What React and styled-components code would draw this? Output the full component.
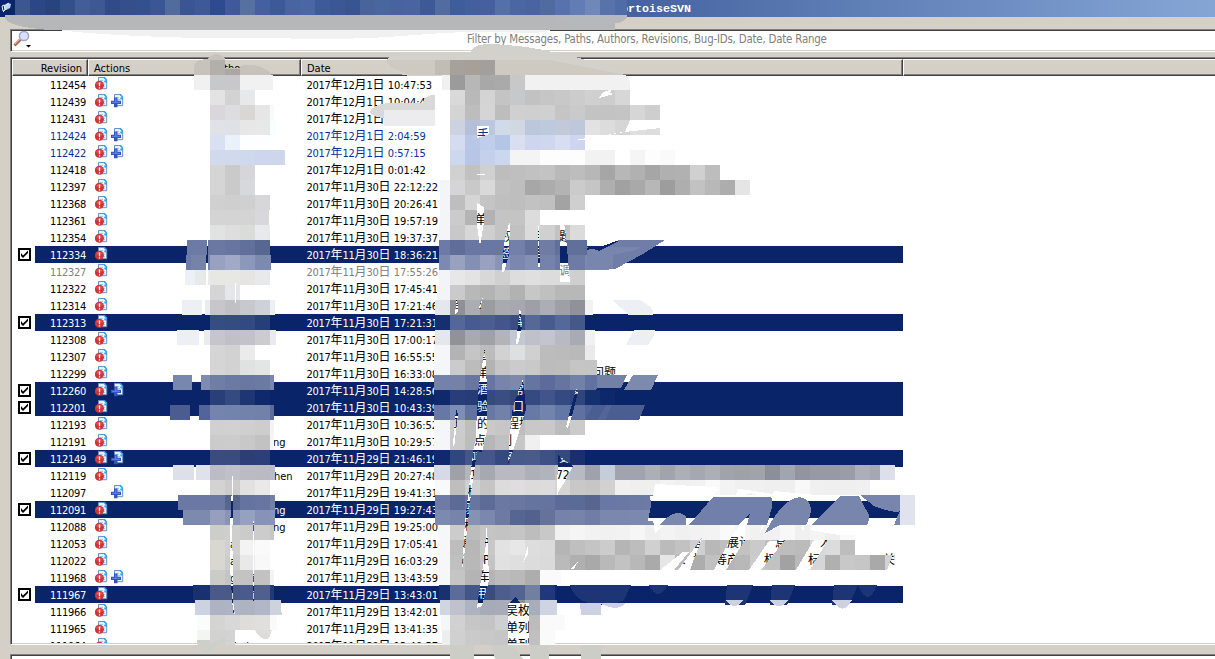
import React from 'react';
import styled, { createGlobalStyle, css } from 'styled-components';

const Global = createGlobalStyle`
  html, body { margin: 0; padding: 0; overflow: hidden; background: #d4d0c8; }
  * { box-sizing: border-box; }
`;

const Window = styled.div`
  position: relative;
  width: 1215px;
  height: 659px;
  overflow: hidden;
  display: flex;
  flex-direction: column;
  background: #d4d0c8;
  font-family: 'DejaVu Sans Condensed', 'DejaVu Sans', 'Noto Sans CJK SC', sans-serif;
  font-size: 11px;
  color: #000;
`;

const TitleBar = styled.div`
  flex: none;
  height: 17px;
  padding: 1px 0 0 614px;
  background: linear-gradient(90deg, #0a246a 0%, #46639f 52%, #5f7fb7 71%, #85a6d5 100%);
  color: #fff;
  font: bold 11.67px/17px 'Liberation Mono', monospace;
`;

const sunken = css`
  border-top: 1px solid #808080;
  border-left: 1px solid #808080;
  box-shadow: inset 1px 1px 0 #404040;
`;

const FilterBox = styled.div`
  ${sunken}
  flex: none;
  display: flex;
  align-items: center;
  height: 23px;
  margin: 12px 0 5px 10px;
  padding: 0 0 2px 2px;
  border-bottom: 1px solid #fff;
  background: linear-gradient(#fff 20px, #d4d0c8 20px);
`;

const SearchButton = styled.svg`
  width: 20px;
  height: 19px;
`;

const Placeholder = styled.span`
  margin-left: 434px;
  color: #808080;
  font-size: 11.4px;
  letter-spacing: -0.2px;
  line-height: 17px;
  white-space: nowrap;
`;

const ListView = styled.div`
  ${sunken}
  flex: none;
  display: flex;
  flex-direction: column;
  height: 588px;
  margin-left: 10px;
  padding: 1px 0 0 1px;
  overflow: hidden;
  background: #fff;
  border-bottom: 1px solid #fff;
`;

const HeaderRow = styled.div`
  flex: none;
  display: flex;
  height: 17px;
  margin-right: -3px;
`;

const HeaderCell = styled.div`
  flex: ${p => (p.$w ? 'none' : '1')};
  width: ${p => (p.$w ? `${p.$w}px` : 'auto')};
  padding: 1px 5px 0;
  text-align: ${p => p.$align || 'left'};
  line-height: 16px;
  background: #d4d0c8;
  border-top: 1px solid #fff;
  border-left: 1px solid #fff;
  border-right: 1px solid #404040;
  border-bottom: 1px solid #404040;
  box-shadow: inset -1px -1px 0 #808080;
`;

const Rows = styled.div`
  flex: none;
  height: 568px;
  overflow: hidden;
  border-bottom: 1px solid #d4d0c8;
`;

const tones = { plain: '#000', blue: '#0a2f9c', gray: '#808080', selected: '#fff' };

const Row = styled.div`
  display: flex;
  height: 17px;
  line-height: 17px;
  white-space: pre;
  color: ${p => tones[p.$tone]};
`;

const CheckCell = styled.div`
  flex: none;
  width: 23px;
  height: 17px;
  padding: 2px 0 0 6px;
  line-height: 0;
`;

const RowBody = styled.div`
  flex: none;
  display: flex;
  width: 868px;
  background: ${p => (p.$selected ? '#0a246a' : 'transparent')};
`;

const Revision = styled.div`
  width: 51px;
  padding-top: 1px;
  text-align: right;
  letter-spacing: -0.3px;
`;

const Actions = styled.div`
  display: flex;
  width: 119px;
  padding-left: 9px;
`;

const ActionSlot = styled.div`
  width: 16px;
  height: 17px;
  line-height: 0;
`;

const Author = styled.div`
  width: 96px;
  padding-top: 1px;
  display: flex;
`;

const DateCell = styled.div`
  flex: none;
  width: 149px;
  padding-left: 5.5px;
  letter-spacing: -0.3px;
  b {
    font: 12px/16px 'Noto Sans CJK SC', sans-serif;
    letter-spacing: 0;
  }
  i { font-style: normal; letter-spacing: 0; }
`;

const Message = styled.div`
  flex: none;
  display: flex;
  width: 453px;
  height: 17px;
  font: 12px/16px 'DejaVu Sans Condensed', 'Noto Sans CJK SC', sans-serif;
`;

const Fragment = styled.span`
  flex: none;
  width: 0;
  margin-left: ${p => p.$gap}px;
`;

const DetailsPane = styled.div`
  ${sunken}
  flex: 1;
  margin: 9px 0 0 10px;
  background: #fff;
`;

const Redaction = styled.svg`
  position: absolute;
  left: 0;
  top: 0;
  pointer-events: none;
`;

const TitleIcon = styled.svg`
  position: absolute;
  left: 0;
  top: 0;
`;

function DocPaper() {
  return (
    <>
      <path d="M4.5 1.5h6.2l2 2.2v9h-8.2z" fill="#e5f3fd" stroke="#6892c9" />
      <path d="M9.500 1h1.300l2 2.500v3H10.500z" fill="#2ba0ee" />
      <path d="M6 4.500h3M6 6.500h4M8 8.500h3M8 10.500h3" stroke="#a9c9e8" />
      <path d="M9.500 2v2.500h2.500z" fill="#fff" />
    </>
  );
}

function ModifiedIcon() {
  return (
    <svg width="16" height="17" viewBox="0 0 16 17">
      <g transform="translate(-1 0)"><DocPaper /></g>
      <circle cx="4.400" cy="9.300" r="4.500" fill="#cf3237" />
      <path d="M1 8.500a3.600 3.600 0 0 1 6.800 0z" fill="#e56a66" opacity=".7" />
      <path d="M4.500 6.500v3.700M4.500 11.200v1.300" stroke="#fff" strokeWidth="1.300" />
    </svg>
  );
}

function AddedIcon() {
  return (
    <svg width="16" height="17" viewBox="0 0 16 17">
      <g transform="translate(-1 0)"><DocPaper /></g>
      <path d="M3 4.500h3.500v3.200h3.500v3.300h-3.500v3.200h-3.500v-3.200h-3.200v-3.300h3.200z" fill="#3155bd" />
      <path d="M4 5.500h1.500v3.200h3.500v1.300h-8v-1.300h3z" fill="#5a7ee2" />
    </svg>
  );
}

function Checked() {
  return (
    <svg width="13" height="13">
      <rect x="1" y="1" width="11" height="11" fill="#fff" stroke="#000" strokeWidth="2" />
      <path d="M3 5v3l2 2 5-5V2.500l-5 5z" fill="#000" />
    </svg>
  );
}

const D1 = '12/1', D30 = '11/30', D29 = '11/29';

// revision, action flags, day, time, tone, message fragments, author fragments
const log = [
  ['112454', 'm', D1, '10:47:53'],
  ['112439', 'ma', D1, '10:04:44'],
  ['112431', 'm', D1, '10:02:12'],
  ['112424', 'ma', D1, '2:04:59', 'blue', [[477, '手']]],
  ['112422', 'ma', D1, '0:57:15', 'blue'],
  ['112418', 'm', D1, '0:01:42', 'plain', [[604, '二']]],
  ['112397', 'm', D30, '22:12:22'],
  ['112368', 'm', D30, '20:26:41'],
  ['112361', 'm', D30, '19:57:19', 'plain', [[475, '单'], [502, '长']]],
  ['112354', 'm', D30, '19:37:37', 'plain', [[501, '权'], [535, '目'], [559, '题']]],
  ['112334', 'm', D30, '18:36:21', 'selected', [[501, '签'], [535, '目']]],
  ['112327', 'm', D30, '17:55:26', 'gray', [[559, '调']]],
  ['112322', 'm', D30, '17:45:41'],
  ['112314', 'm', D30, '17:21:46', 'plain', [[452, '自'], [478, '外']]],
  ['112313', 'm', D30, '17:21:31', 'selected', [[515, '单']]],
  ['112308', 'm', D30, '17:00:17'],
  ['112307', 'm', D30, '16:55:55', 'plain', [[477, '酒']]],
  ['112299', 'm', D30, '16:33:08', 'plain', [[477, '单'], [592, '问题']]],
  ['112260', 'ma', D30, '14:28:56', 'selected', [[477, '酒'], [512, '常'], [571, '变']]],
  ['112201', 'm', D30, '10:43:39', 'selected', [[452, '用'], [477, '验'], [512, '口'], [526, '子']]],
  ['112193', 'm', D30, '10:36:52', 'plain', [[450, '正'], [477, '的'], [507, '程技']]],
  ['112191', 'm', D30, '10:29:57', 'plain', [[474, '点'], [500, '列']], [[273, 'ng']]],
  ['112149', 'ma', D29, '21:46:19', 'selected', [[471, '吗'], [503, '务'], [559, '更']]],
  ['112119', 'm', D29, '20:27:48', 'plain', [[470, '17'], [556, '72']], [[252, 'e'], [274, 'hen']]],
  ['112097', ' a', D29, '19:41:31', 'plain', [[467, '标'], [558, '4']]],
  ['112091', 'm', D29, '19:27:43', 'selected', [[465, '验']], [[252, 'r'], [273, 'ng']]],
  ['112088', 'm', D29, '19:25:00', 'plain', [[464, '标']], [[232, 'r'], [252, 'i'], [273, 'ng']]],
  ['112053', 'm', D29, '17:05:41', 'plain', [[460, '通'], [483, 'P'], [690, '室'], [715, '进展计'], [775, '息'], [820, '人']], [[230, 'a']]],
  ['112022', 'm', D29, '16:03:29', 'plain', [[460, '通'], [483, 'P'], [570, '2'], [647, '产'], [681, '、技'], [715, '等产'], [764, '权产'], [808, '标'], [883, '关']], [[230, 'a']]],
  ['111968', 'ma', D29, '13:43:59', 'plain', [[478, '车']], [[230, 'g'], [252, 'i']]],
  ['111967', 'm', D29, '13:43:01', 'selected', [[475, '用车']], [[231, 'n'], [252, 'i']]],
  ['111966', 'm', D29, '13:42:01', 'plain', [[506, '吴枚']], [[232, 'r']]],
  ['111965', 'm', D29, '13:41:35', 'plain', [[506, '单列']]],
  ['111964', 'm', D29, '13:40:57', 'plain', [[486, '；'], [506, '单列']], [[234, 'hei']]],
];

function Fragments({ items = [], origin }) {
  return items.map(([x, text], i) => (
    <Fragment key={x} $gap={x - (i ? items[i - 1][0] : origin)}>{text}</Fragment>
  ));
}

function LogRow({ entry }) {
  const [rev, flags, day, time, tone = 'plain', message, author] = entry;
  const [month, date] = day.split('/');
  const selected = tone === 'selected';
  return (
    <Row $tone={tone}>
      <CheckCell>{selected && <Checked />}</CheckCell>
      <RowBody $selected={selected}>
        <Revision>{rev}</Revision>
        <Actions>
          <ActionSlot>{flags.includes('m') && <ModifiedIcon />}</ActionSlot>
          <ActionSlot>{flags.includes('a') && <AddedIcon />}</ActionSlot>
        </Actions>
        <Author><Fragments items={author} origin={205} /></Author>
        <DateCell>2017<b>年</b>{month}<b>月</b>{date}<b>日</b><i> {time}</i></DateCell>
        <Message><Fragments items={message} origin={450} /></Message>
      </RowBody>
    </Row>
  );
}

// Mosaic strips: top, left, cell colours. Two digits are a grey; ":n" sets a width other than 15.
const strips = [
  [0, 15, '3c5790 2c4786 29437f 33508b 425d97 3e5894 314b88 354e8c 35508f 3b5595 516b9c 3a5592 3d5997 2d4b8e 40599a 56709f 465fa0 3c5998 4964a0 4b66a4 3d5a99 3b5795 385591 48649b 4a669f 4863a0 4964a0 3d5997 536c9f 3e5d9d 445f9e 465f9f 5370a8 4a66a3 4964a0 506ba0 5872ad 627db3 6e88b8 5873aa 4f6ca6:12'],
  [75, 194, 'f1:16 c7c8ca c8c8cb f1 f1:18'],
  [90, 210, 'e3 d3 e7e8ea'],
  [105, 210, 'd9d7d9 dddce0 d8d7d5 e6 fa:4'],
  [120, 210, 'e0e2e8 dfe1e6 e7 e8 fafdfe:6'],
  [135, 210, 'd9e0f1 ebf1fb fdfeff fdfeff'],
  [150, 210, 'd1daed d1daed cfd9ee cdd6ec ced6eb'],
  [165, 210, 'd5 ca d6d6da'],
  [180, 210, 'd5 ca d7d8dc'],
  [195, 210, 'd0 cf d0 d7d7da'],
  [210, 210, 'd4 d4 d4 d8d8dc:14'],
  [225, 210, 'e1e3e2 dddedd dadcda e8e9ea'],
  [240, 187, '6c7aa6:20'],
  [240, 208, '6877a0:2 6a78a2 68769f 61709b 586792'],
  [255, 186, '6d7ba6:5 7683a9:15'],
  [255, 208, '7683a9:2 98a2c0 a0a9c5 8b98b9 7d8ab0:16'],
  [270, 185, 'edf1f6:10 e8e9e9:11'],
  [270, 208, 'eaebea:2 e7e8e4 e7e7e4 e6e5e4 e8e9eb'],
  [285, 210, 'd5 e5e6e8'],
  [300, 182, 'eeeff5:20'],
  [300, 205, 'ebecf1:5 c7c6ca c1c0c5 c8c8cf cfd1d9 eeeff5:5'],
  [315, 210, '364d84 354c83 334983 263f7c'],
  [330, 177, 'eeeff5:22'],
  [330, 204, 'ebecf1:6 c6c5cb c1c0c8 c3c2cb cccbd0 e9eaf0:6'],
  [345, 210, 'd5 d2 eb'],
  [360, 210, 'd5 d2 e0e1e1 e4e6e5'],
  [375, 173, '7887ad:19'],
  [375, 201, '7f8cb1:9 6f7ea5 6b7aa2 6977a1 6b7aa3 7887ad:4'],
  [390, 210, '2a3f7a 344b82 1e3672 0e296c'],
  [405, 170, '4b5d90:20'],
  [405, 199, '53649a:11 7484ac 7384ac 7283ab 7182aa 5b6c9c:4'],
  [420, 210, 'd0 d1 cf cd f4:4'],
  [435, 210, 'cb cc c8 c2 f6:4'],
  [450, 210, '3a4b80 3a4b80 2c3e78 2c3f7a'],
  [465, 173, 'dde0eb:21'],
  [465, 196, 'dfe2ed:14 bcbdc4 c0c0c8 babbc3 b9bac2 babcc5:5'],
  [480, 210, 'd3 cc e1 e9'],
  [495, 178, '6a78a3:32 6a78a3 57668f 6573a0 6775a1 7480a6:5'],
  [510, 183, '7c8aae:27 96a0be 8793b8 96a0bf 8793b6 8895b8:5'],
  [525, 210, 'cdcdca cfcfcb cb cdcccd c6:4'],
  [540, 210, 'd8d7d2 d0 f3 fa'],
  [555, 210, 'd8d7d2 cc e9 f8'],
  [570, 210, 'cbccc8 c4 c3 c2 f4:4'],
  [585, 193, '1a3170:17 495988 4a5988 4a5a8c 515f8f 20397a:4'],
  [600, 195, 'ccd2e0:15 adb3c3 aeb4c6 aeb3c1 b2b7c7 cdd2df:11'],
  [615, 197, 'fafdfc:13 d4d5d3 d8 dedddb e0dfdd fa:7'],
  [630, 197, 'f3f5f2:13 cfd0cd d3:10'],

  [75, 442, 'f1:8 9b b7 a8 aa c8'],
  [90, 450, 'd9 b9 d4 c4 c7c8ca c2 c6 c8 cc d0 cd d7'],
  [105, 450, 'd4 bd d5 bd d0 cf d0 c5 ca c3 c3 c4 d6 ce'],
  [120, 450, 'ccd2df b6bfd8 bcc6df d1dae8 d1d8e2 bcc7dc bec9de c2c9d8 bfc8da e2 dc d6 df dd'],
  [135, 450, 'd5dcf0 b9c6e6 c0cdeb b5c5e6 d9dff1 cdd6ee ced7ee d8def2 cdd5f0'],
  [150, 450, 'cdd8ee b9c5e5 c5d1ec cbd7ef f4 f4 fd fd fd f2 f2'],
  [150, 630, 'f5 fd fa'],
  [165, 450, 'd1 c1 d0 bd bf c1 c3 b9 bd b7 a6 b7 b1 a6 b0 b1 d0 bd'],
  [180, 440, 'f3f5f8:10 d5 c9 d9 c1 be a7 ac b3 cb c5 af a1 a9 b7 9d ae c2 b8 ad e5'],
  [195, 440, 'f3f5f8:10 be d5 c4 bf be c2 c0 a3 cf'],
  [210, 440, 'f3f5f8:10 cb b4 b2 c4 c4 dc'],
  [225, 439, 'f3f5f8:11 c8 d7 cf c4 c1 db d0 c3 db'],
  [240, 439, '6c7aa7:11 606d98 6977a2 6a77a2 6977a3 7380a9 65739c 707ca4 61709b 616f9b 5e6e9c:2'],
  [255, 439, '7c8ab0:11 98a2be 8490b3 98a2c0 8995b7 7b87ad 8490b3 7582aa 6b7aa4 6e7ba4 7b89ae:24'],
  [270, 439, 'f2f4f8:11 e7 e3 d8 d0 dd df dc dc cf'],
  [285, 437, 'f2f4f8:13 ca b8 b3 be b2 c7 c0 b8 b8'],
  [300, 435, 'e4e7ee:15 909196 acadb3 9b9ca0 a9aaaf a8a9b0 9fa0a7 acadb5 9fa0a6 909299 f2:8'],
  [315, 435, '16306f 54669a 475a92 4b5d92 44558d 3b4d82 566896 485b8f 54689a 465888'],
  [330, 435, 'e4e7ee 919297 a9aab0 a0a1a6 b2b4ba c4c8d5 bec0ca c3c4cc b8bac3 a9abb4 f1:10'],
  [345, 434, 'f4f6f9:16 b3 c5 bc d2 dedfe1 d0 bc bb b9 ea:10'],
  [360, 434, 'f4f6f9:16 cb bc b3 c5 cb c9 bc bd c5 c4 cc:12'],
  [375, 434, '7482ab:16 7581a7 6876a1 6775a0 7884aa 7d88ab 6575a1 5d6b9c 6575a0 7281a9 6171a0 657197'],
  [390, 434, '10296d:16 293d7a 263c78 344a80 3a4e82 34477d 354a80 41558a 344a80 30457c 15306f 0d286b'],
  [405, 434, '6777a6:16 7e8db3 6272a0 6878a5 7181aa 5e709f 677aa5 7384ac 6377a4 60719f 53659a 53659a'],
  [420, 434, 'f4f6f9:16 cc be c9 c6 be c8 c8 bc cb'],
  [435, 434, 'f4f6f9:16 cb bd b6 c0 c6 f0:15'],
  [450, 434, '10296d:16 304680 42568c 44568c 34497f 465a8c 495a8c 3e5187 33497f 192f6e'],
  [465, 434, 'd5dae6:16 9fa1a7 b5b6bc a7a9b0 b8b9c1 b8b9c1 aeb0b8 b2b4bd c0c1c8 b8bac3 9fa1ac c5cddb a1a3ae a1a3ae acaeb8 a1a3ae acaeb8 a5a8b2 acaeb8 a1a3ac 9fa1a9 a1a3ac 8b8f9a a1a5b0 9294a0 9799a5 9799a5 9a9ca8 acaeb9 a5a8b2:10 dde0eb'],
  [480, 435, 'f7f9fb be d0 c5 dc dfdde0 db dc d5 c8 c6 d1 f0 ef ef f3 f0 f2 fa f3 f0 f0 ef ef f8 f0 ef ef f0'],
  [495, 435, '6d7ba6 5c6a96 67759f 5d6c96 6a78a2 6977a1 65739f 65739f 5b6a96 5b6b98 57658f 6877a4 6a78a4 6b79a5 6c7aa5 6c7aa6:9'],
  [510, 435, '7c8ab0 7784aa 8592b3 7b88ad 6d7ba3 566692 53628c 65739b 7582a9 7784aa 707da4 7b88ae 7b88ae 7b89ae 7c8ab0 7c8ab0:5'],
  [525, 438, 'f5f7f9:12 cc bc c5 c3 c5 bd c8 f1 f5 f2 f1 f2 f6 ef f3 f0 f2 f3 fa f4 f1 f1 f8 f0 f4 ef fa'],
  [540, 438, 'f5f7f9:12 bd b7 c8 e2 e7 dd db b5 bf c4 cc b5 bd d0 bb c2 cf b8 bf c2 ca c0 bd bb d8 dc bd'],
  [555, 439, 'f5f7f9:11 c0 b8 c4 e1 df dc da ba b0 a9 b9 c2 b8 aa e6 bb ad c1 b5 b8 cb c2 a2 b9 d6 b0 c8 c6 a9 d3:10'],
  [570, 439, 'f5f7f9:11 c5 b4 b4 bc b9 ad fa fa:6'],
  [585, 439, '1a3170:11 5b6b9a 42568c 384c82 4c5d8e 526394 71809f 20387a 0d286b:2'],
  [600, 440, 'd0d5e2:10 bfc2cd aeb3c2 a7abb8 a9acb8 8f9298 a9adb9 ced4e1 ced4e1:2'],
  [615, 441, 'f5f6f8:9 d1 c6 c4 cecfd1 cacbd0 bc fa fa:10'],
  [630, 442, 'eceef0:8 d0 ca c8 c6 c9 c0 fa'],
];

function cells() {
  const out = [];
  strips.forEach(([y, left, spec], s) => {
    let x = left;
    spec.split(' ').filter(Boolean).forEach((token, i) => {
      const [c, w = '15'] = token.split(':');
      out.push(<rect key={`${s}-${i}`} x={x} y={y} width={+w} height="15" fill={`#${c.length === 2 ? c.repeat(3) : c}`} />);
      x += +w;
    });
  });
  return out;
}

// Gaps between brush strokes, where the list stays visible.
const gaps = [
  'M477 126h12v8l-12 4z', 'M603 92l9-3-2 4 4 1-15 4z',
  'M477 203l7 4v15l-4 24-3-20z', 'M510 220l-1 35-5 17h-2l2-30z', 'M538 212l2 55h-2z', 'M560 223l5 3 5 56h-10z',
  'M477 174h8v1h-8z', 'M457 294l1 18-3 2z', 'M483 297l-3 14-1-4z', 'M520 305l2 22-4 17h-2z',
  'M485 347l2 42v42l-5 21-7-1 3-60z', 'M456 409l2 5-4 34-1-4z', 'M523 379l3 30-10 33-8 22v12l1-37 4-33z',
  'M576 388l2 4-5 20-5 16-2-1z', 'M616 361v29h-20l4-10z', 'M597 370v14l5-4 14-20v-2h-19z',
  'M480 430l-9 64-8 73h-1l3-45 9-77z', 'M558 455l15 11-13 24-3 6z',
  'M487 522l2 58-7 26-5 2 7-49z', 'M528 545v9l-5 9z', 'M579 560l-5 9h-3z',
  'M516 597l4 6h9v55h-21v-54z', 'M235 283h1v20h-1z',
  'M233 466v44l-1 31 1 20v39l2 15-2-3-3-45v-40z', 'M253 436l1 165h-1z',
  'M655 484l62 3-8 13 25-3 5-8 35 5-4 4-20-5-37 15-20 18-45-5z',
  'M650 496h62l-16 19-12-3-13 5-16 17z', 'M695 487l24 2-34 36-12-14z',
  'M737 489l6 4-6 5z', 'M774 491l64 6-31 18-4 17-5-20-12-15-16 20-11 17z',
  'M838 498l20 2 7 12v23h-26l-29-5z', 'M858 502l14 8 24 8v17h-29z',
  'M703 536l-13 34h-12l15-20z', 'M689 552l-15 18h-14l23-18z',
  'M745 517v23l-19 30h-12l15-29z',
  'M785 540l-24 30h-12l20-29z', 'M828 540l-18 30h-14l18-30z', 'M893 555l-6 15h15z',
  'M630 120h31l-1 8-45 5-15 6-25 1 50-8z',
];

function Masked() {
  return (
    <Redaction width="1215" height="659" viewBox="0 0 1215 659" shapeRendering="crispEdges">
      <defs>
        <mask id="gaps" maskUnits="userSpaceOnUse" x="0" y="0" width="1215" height="659">
          <rect width="1215" height="659" fill="#fff" />
          {gaps.map(d => <path key={d} d={d} fill="#000" />)}
        </mask>
      </defs>
      <path d="M5 15h610v15H50Q8 27 5 18z" fill="#b6b7b8" />
      <path d="M555 15h72q2 4-8 8-25 2-61-1z" fill="#b5b8bd" />
      <path d="M57 30h496q-15 4-30 3l-20-1q-40-1-88 3-70 6-140 3h-75q-90-2-143-8z" fill="#f1f1f1" />
      <path d="M194 67q0-7 13-8 9-9 18-1v10h15v-2q14-3 23 2 8 3 8 7h-77z" fill="#c7c3bc" />
      <path d="M386 62q0-7 20-9h65q0-9 20-9 40 2 65 9 35 5 68 23H410q-15-2-15-5-10-3-9-9z" fill="#d3d1cc" />
      <path d="M386 60h164q40 8 75 15H410l-20-8z" fill="#cec9c1" />
      <path d="M210 60h15v15h-15z" fill="#b3b0ab" /><path d="M225 69h15v6h-15z" fill="#aaa8a4" />
      <path d="M435 60h15v15h-15z" fill="#c1bdb5" />
      <path d="M450 60h15v15h-15z" fill="#a6a19d" /><path d="M465 60h15v15h-15z" fill="#a7a099" />
      <path d="M480 60h15v15h-15z" fill="#a39f9c" />
      <path d="M525 75h101q6 6 4 15H525z" fill="#f1f1f1" />
      <path d="M370 112q3-8 20-9h33q1-8 12-8v30h-48v-7q-14 0-17-6z" fill="#d9d9da" />
      <path d="M384 110h51v16h-51z" fill="#ececef" />
      <g mask="url(#gaps)">{cells()}</g>
      <path d="M587 240h78l-22 14-28 15h-28v-18l12-1z" fill="#6f7da8" />
      <path d="M587 247h55l-6 3-23 5v14h-26z" fill="#7885ad" />
      <path d="M588 246l-1 4q7-2 12 1l20-10h-32z" fill="#0a246a" />
      <path d="M587 240h32l-16 6h-16z" fill="#fff" />
      <path d="M612 300h28q15 8 13 15h-24z" fill="#eeeff5" /><path d="M634 330h21q-2 11-8 15h-21z" fill="#eeeff5" />
      <path d="M624 390l9-15h25l-7 15z" fill="#7c8aae" /><path d="M597 375h30l-6 13h-24z" fill="#7481a6" />
      <path d="M606 405h-13l-8 15h13zM612 405h33l-6 15h-34z" fill="#4b5e92" />
      <path d="M689 525l24-28h55q6-1 4 10l-5 18h-20l3-12-11 12z" fill="#7180aa" />
      <path d="M765 533q18-35 35-36 14 3 10 19l-4 9h-26z" fill="#7885ad" />
      <path d="M812 525l28-29h19l6 12q7 8 2 17zM860 495h40v17q-12 0-26-6zM900 510l-6 15h6z" fill="#7886ad" />
      <path d="M900 495h15v30h-15z" fill="#e0e3ed" /><path d="M659 525q18-19 27-8v8z" fill="#7b89af" />
      <path d="M570 585h61l-7 15-14 6-14-2q-20-1-26-19zM649 585h19q-10 18-19 0zM727 585h26l-8 20h-20zM772 585h23l-8 20h-17zM834 585h24l-9 20h-17zM858 585h19q-9 24-19 0z" fill="#1d3575" />
      <path d="M580 603h46q-8 9-25 1v11h-20zM726 600h17q-8 12-17 0zM770 600h18q-9 13-18 0zM832 600h20q-9 17-20 0z" fill="#ccd2e1" />
      <path d="M270 600q12 7 12 15h-12z" fill="#cdd2df" />
      <path d="M197 640h36l-15 3q-4 9-12 10-9-2-9-13z" fill="#cfcfc9" />
      <path d="M450 645h24v14h-24zM491 645h22l10 14h-28zM530 645h19v14h-19zM581 645h20v14h-20z" fill="#cccdc7" />
      <path d="M210 630h23l-12 9-11 5z" fill="#d2d3d0" /><path d="M255 630h17l-3 8q-8 4-14-8z" fill="#dedddb" />
    </Redaction>
  );
}

export default function App() {
  return (
    <Window>
      <Global />
      <TitleBar>TortoiseSVN</TitleBar>
      <FilterBox>
        <SearchButton viewBox="0 0 20 19">
          <path d="M1.500 15.500l6-6" stroke="#b66b55" strokeWidth="3" />
          <path d="M2 14l5-5" stroke="#e9ad93" />
          <circle cx="11" cy="6" r="4.600" fill="#d9e1ff" stroke="#9da5cb" strokeWidth="1.500" />
          <path d="M13 15h5l-2.500 2.500z" fill="#000" />
        </SearchButton>
        <Placeholder>Filter by Messages, Paths, Authors, Revisions, Bug-IDs, Date, Date Range</Placeholder>
      </FilterBox>
      <ListView>
        <HeaderRow>
          <HeaderCell $w={76} $align="right">Revision</HeaderCell>
          <HeaderCell $w={117}>Actions</HeaderCell>
          <HeaderCell $w={96}>Author</HeaderCell>
          <HeaderCell $w={149}>Date</HeaderCell>
          <HeaderCell $w={453}>Message</HeaderCell>
          <HeaderCell />
        </HeaderRow>
        <Rows>{log.map(entry => <LogRow key={entry[0]} entry={entry} />)}</Rows>
      </ListView>
      <DetailsPane />
      <Masked />
      <TitleIcon width="16" height="17" viewBox="0 0 16 17">
        <path d="M4 5l4-2 3 1-1 4-4 2-2-2z" fill="#b9d4f7" />
        <path d="M2 6l2-1 1 5-2 1zM3 12l3-3M6 5l3-2" stroke="#e7eff8" fill="none" />
      </TitleIcon>
    </Window>
  );
}
